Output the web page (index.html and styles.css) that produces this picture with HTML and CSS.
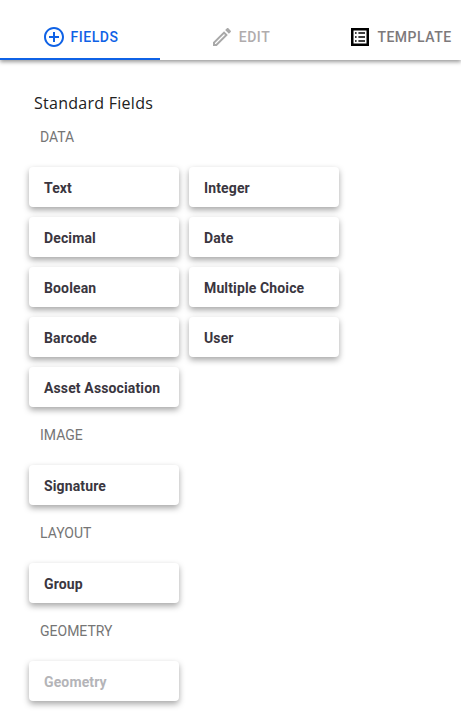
FILE: index.html
```html
<!DOCTYPE html>
<html lang="en">
<head>
  <meta charset="UTF-8" />
  <title>Form Fields</title>
  <link rel="stylesheet" href="styles.css">
</head>
<body>
  <div class="tabs">
    <div class="tab active">
      <svg class="tab-icon" viewBox="0 0 24 24"><path d="M13 7h-2v4H7v2h4v4h2v-4h4v-2h-4V7zm-1-5C6.48 2 2 6.48 2 12s4.48 10 10 10 10-4.48 10-10S17.52 2 12 2zm0 18c-4.41 0-8-3.59-8-8s3.59-8 8-8 8 3.59 8 8-3.59 8-8 8z"/></svg>
      <span>Fields</span>
    </div>
    <div class="tab disabled">
      <svg class="tab-icon" viewBox="0 0 24 24"><path d="M14.06 9.02l.92.92L5.92 19H5v-.92l9.06-9.06M17.66 3c-.25 0-.51.1-.7.29l-1.83 1.83 3.75 3.75 1.83-1.83c.39-.39.39-1.02 0-1.41l-2.34-2.34c-.2-.2-.45-.29-.71-.29zm-3.6 3.19L3 17.25V21h3.75L17.81 9.94l-3.75-3.75z"/></svg>
      <span>Edit</span>
    </div>
    <div class="tab">
      <svg class="tab-icon template-icon" viewBox="0 0 18 18"><path fill-rule="evenodd" d="M0 0h18v18H0V0zm2.5 2.5v13h13v-13h-13zM4 4.2h1.6v1.6H4V4.2zm3.4 0H14v1.6H7.4V4.2zM4 8.2h1.6v1.6H4V8.2zm3.4 0H14v1.6H7.4V8.2zM4 12.2h1.6v1.6H4v-1.6zm3.4 0H14v1.6H7.4v-1.6z"/></svg>
      <span>Template</span>
    </div>
  </div>

  <div class="content">
    <h2>Standard Fields</h2>

    <h3>Data</h3>
    <div class="fields">
      <div class="field">Text</div>
      <div class="field">Integer</div>
      <div class="field">Decimal</div>
      <div class="field">Date</div>
      <div class="field">Boolean</div>
      <div class="field">Multiple Choice</div>
      <div class="field">Barcode</div>
      <div class="field">User</div>
      <div class="field">Asset Association</div>
    </div>

    <h3>Image</h3>
    <div class="fields">
      <div class="field">Signature</div>
    </div>

    <h3>Layout</h3>
    <div class="fields">
      <div class="field">Group</div>
    </div>

    <h3>Geometry</h3>
    <div class="fields">
      <div class="field disabled">Geometry</div>
    </div>
  </div>
</body>
</html>
```

FILE: styles.css
```css
* {
  box-sizing: border-box;
}
body {
  margin: 0;
  background: #ffffff;
  font-family: 'Roboto', sans-serif;
  overflow: hidden;
}
.tabs {
  display: flex;
  height: 60px;
  padding-top: 16px;
  box-shadow: 0 2px 4px rgba(0, 0, 0, 0.4);
}
.tab {
  width: 160px;
  flex: none;
  height: 44px;
  padding-bottom: 3px;
  display: flex;
  justify-content: center;
  align-items: center;
  gap: 5px;
  color: #7d797b;
  fill: #000000;
  font-size: 14px;
  font-weight: 500;
  letter-spacing: 0.5px;
  text-transform: uppercase;
}
.tab.active {
  color: #0f62e6;
  fill: #0f62e6;
  border-bottom: 2px solid #0f62e6;
  padding-bottom: 1px;
}
.tab.disabled {
  color: #b0acad;
  fill: #a8a8a8;
}
.tab-icon {
  width: 24px;
  height: 24px;
}
.template-icon {
  width: 18px;
  height: 18px;
  margin: 0 3px;
}
.content {
  padding: 32px 0 0 29px;
}
h2 {
  margin: 0 0 0 5px;
  font-family: 'Open Sans', sans-serif;
  font-size: 16px;
  font-weight: 400;
  line-height: 22px;
  letter-spacing: 0.27px;
  color: #212121;
}
h3 {
  margin: 0 0 20px 11px;
  font-size: 14px;
  font-weight: 400;
  line-height: 20px;
  color: #757575;
  text-transform: uppercase;
}
h2 + h3 {
  margin-top: 13px;
}
.fields {
  display: grid;
  grid-template-columns: 150px 150px;
  gap: 10px;
  margin-bottom: 18px;
}
.field {
  height: 40px;
  padding: 2px 0 0 15px;
  display: flex;
  align-items: center;
  background: #ffffff;
  border-radius: 4px;
  box-shadow: 0 3px 6px rgba(0, 0, 0, 0.35);
  font-size: 14px;
  font-weight: 700;
  letter-spacing: 0.13px;
  color: #3a3640;
}
.field.disabled {
  color: #b4b4b8;
}
```
